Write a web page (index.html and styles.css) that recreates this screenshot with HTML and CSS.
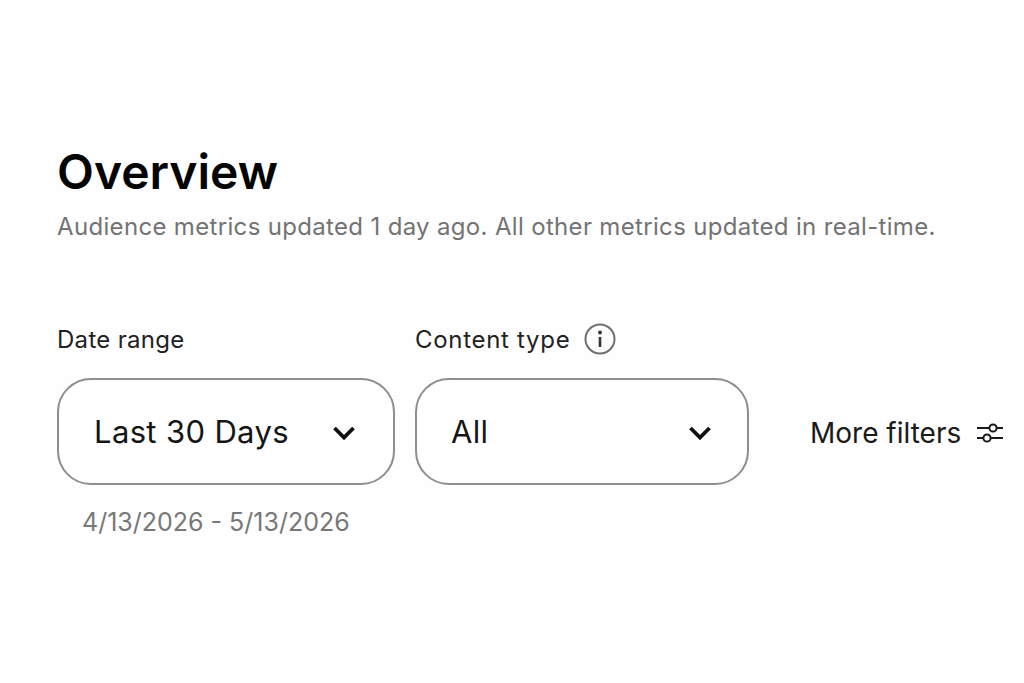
FILE: index.html
```html
<!DOCTYPE html>
<html lang="en">
<head>
<meta charset="UTF-8" />
<meta name="viewport" content="width=device-width, initial-scale=1" />
<title>Overview</title>
<link rel="stylesheet" href="styles.css">
</head>
<body>
  <main class="overview">
    <h1 class="title">Overview</h1>
    <p class="subtitle">Audience metrics updated 1 day ago. All other metrics updated in real-time.</p>

    <div class="filters">
      <div class="label">Date range</div>
      <div class="label label-type">
        Content type
        <svg class="info-icon" viewBox="0 0 32 32" width="32" height="32" aria-hidden="true">
          <circle cx="16" cy="16" r="14.5" fill="none" stroke="#6f6f6f" stroke-width="2"/>
          <circle cx="16" cy="9.5" r="1.9" fill="#333"/>
          <path d="M16 14v10" fill="none" stroke="#333" stroke-width="2.6"/>
        </svg>
      </div>
      <div></div>

      <div class="select select-date">
        <span>Last 30 Days</span>
        <svg class="chevron" viewBox="0 0 24 16" width="24" height="16" aria-hidden="true">
          <path d="M2.5 3 12 12.5 21.5 3" fill="none" stroke="#111" stroke-width="3.8"/>
        </svg>
      </div>
      <div class="select select-type">
        <span>All</span>
        <svg class="chevron" viewBox="0 0 24 16" width="24" height="16" aria-hidden="true">
          <path d="M2.5 3 12 12.5 21.5 3" fill="none" stroke="#111" stroke-width="3.8"/>
        </svg>
      </div>
      <div class="more-filters">
        More filters
        <svg class="sliders-icon" viewBox="0 0 26 24" width="26" height="24" aria-hidden="true">
          <g fill="none" stroke="#1a1a1a" stroke-width="2">
            <path d="M0 7h12M20 7h6M0 17h6M14 17h12"/>
            <circle cx="16" cy="7" r="3.6"/>
            <circle cx="10" cy="17" r="3.6"/>
          </g>
        </svg>
      </div>

      <div class="date-hint">4/13/2026 - 5/13/2026</div>
    </div>
  </main>
</body>
</html>
```

FILE: styles.css
```css
body {
  font-family: Inter, "Liberation Sans", sans-serif;
  background-color: #fefefe;
  color: #111;
  margin: 0;
}

.overview {
  padding: 144px 0 0 57px;
}

.title {
  font-size: 48px;
  font-weight: 600;
  line-height: 56px;
  color: #050505;
  margin: 0;
}

.subtitle {
  font-size: 24px;
  line-height: 30px;
  letter-spacing: 0.33px;
  color: #737373;
  margin: 12px 0 0;
}

.filters {
  display: grid;
  grid-template-columns: 338px 334px auto;
  column-gap: 20px;
  margin-top: 78px;
}

.label {
  display: flex;
  align-items: center;
  gap: 14px;
  height: 38px;
  font-size: 24px;
  letter-spacing: 0.3px;
  color: #222;
  margin-bottom: 20px;
}

.label-type {
  letter-spacing: 0.7px;
}

.select {
  display: flex;
  align-items: center;
  justify-content: space-between;
  box-sizing: border-box;
  height: 107px;
  border: 2px solid #8e8e8e;
  border-radius: 34px;
  background: #fff;
  font-size: 31px;
  letter-spacing: 0.35px;
  color: #151515;
}

.select-date {
  padding: 0 37px 0 35px;
}

.select-type {
  padding: 0 35px 0 34px;
}

.chevron {
  margin-top: 2px;
}

.more-filters {
  display: flex;
  align-items: center;
  gap: 16px;
  margin-left: 41px;
  padding-top: 2px;
  font-size: 28px;
  color: #1a1a1a;
  white-space: nowrap;
}

.date-hint {
  grid-column: 1;
  font-size: 25px;
  line-height: 32px;
  color: #787878;
  margin: 21px 0 0 25px;
  white-space: nowrap;
}
```
